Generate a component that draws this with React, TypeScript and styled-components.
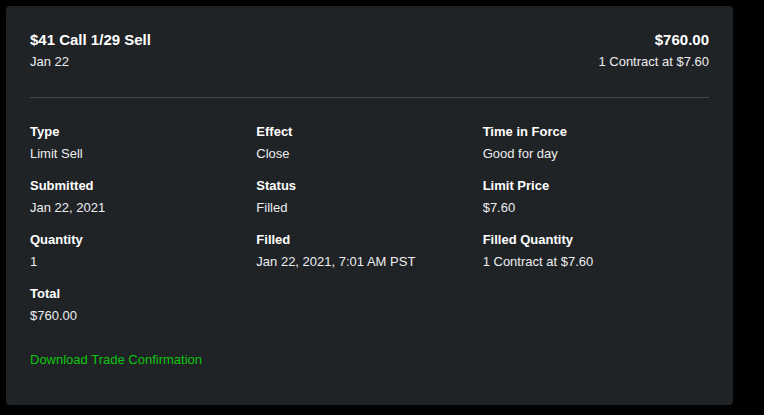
import styled, { createGlobalStyle } from 'styled-components';

const Global = createGlobalStyle`
  html, body {
    margin: 0;
    background: #000;
  }
  body {
    font-family: "Liberation Sans", Arial, sans-serif;
    -webkit-font-smoothing: antialiased;
  }
`;

const Page = styled.div`
  padding: 6px;
`;

const Card = styled.div`
  width: 727px;
  height: 399px;
  box-sizing: border-box;
  background: #202326;
  border-radius: 4px;
  padding: 24px 24px 36px;
  color: #fff;
`;

const Header = styled.div`
  display: flex;
  justify-content: space-between;
  padding-bottom: 25px;
  border-bottom: 1px solid #45484b;
`;

const HeadCol = styled.div<{ $right?: boolean }>`
  display: flex;
  flex-direction: column;
  gap: 2px;
  align-items: ${p => (p.$right ? 'flex-end' : 'flex-start')};
`;

const Title = styled.div`
  font-size: 15px;
  font-weight: 700;
  line-height: 20px;
`;

const Sub = styled.div`
  font-size: 13px;
  line-height: 20px;
  color: #eceef0;
`;

const Grid = styled.div`
  display: grid;
  grid-template-columns: repeat(3, 1fr);
  row-gap: 12px;
  margin-top: 24px;
`;

const Field = styled.div`
  display: flex;
  flex-direction: column;
  gap: 2px;
`;

const Label = styled.div`
  font-size: 13px;
  font-weight: 700;
  line-height: 20px;
`;

const Value = styled.div`
  font-size: 13px;
  line-height: 20px;
  color: #eceef0;
`;

const Link = styled.a`
  display: inline-block;
  margin-top: 24px;
  font-size: 13px;
  line-height: 20px;
  color: #0cc40c;
  text-decoration: none;
  cursor: pointer;
`;

const fields: [string, string][] = [
  ['Type', 'Limit Sell'],
  ['Effect', 'Close'],
  ['Time in Force', 'Good for day'],
  ['Submitted', 'Jan 22, 2021'],
  ['Status', 'Filled'],
  ['Limit Price', '$7.60'],
  ['Quantity', '1'],
  ['Filled', 'Jan 22, 2021, 7:01 AM PST'],
  ['Filled Quantity', '1 Contract at $7.60'],
  ['Total', '$760.00'],
];

export default function App() {
  return (
    <Page>
      <Global />
      <Card>
        <Header>
          <HeadCol>
            <Title>$41 Call 1/29 Sell</Title>
            <Sub>Jan 22</Sub>
          </HeadCol>
          <HeadCol $right>
            <Title>$760.00</Title>
            <Sub>1 Contract at $7.60</Sub>
          </HeadCol>
        </Header>
        <Grid>
          {fields.map(([label, value]) => (
            <Field key={label}>
              <Label>{label}</Label>
              <Value>{value}</Value>
            </Field>
          ))}
        </Grid>
        <Link>Download Trade Confirmation</Link>
      </Card>
    </Page>
  );
}
